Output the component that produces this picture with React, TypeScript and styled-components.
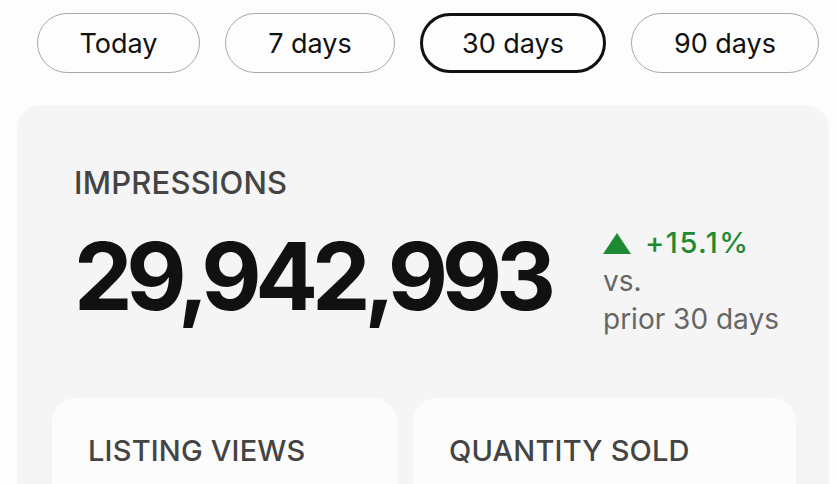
import styled, { createGlobalStyle } from "styled-components";

const GlobalStyle = createGlobalStyle`
  html, body {
    margin: 0;
    padding: 0;
    background: #fdfdfd;
    font-family: Inter, "Open Sans", sans-serif;
  }
`;

const Page = styled.div`
  width: 836px;
  height: 484px;
  overflow: hidden;
  padding: 13px 17px 0 17px;
  box-sizing: border-box;
`;

const RangeBar = styled.div`
  display: flex;
  gap: 25px;
  padding-left: 20px;
`;

const RangePill = styled.button<{ active?: boolean; w: number }>`
  width: ${({ w }) => w}px;
  height: 60px;
  box-sizing: border-box;
  border-radius: 30px;
  background: #fdfdfd;
  border: ${({ active }) => (active ? "3px solid #111" : "1.5px solid #a8a8a8")};
  font-family: Inter, sans-serif;
  font-size: 27px;
  color: #111;
  padding: 0;
`;

const Panel = styled.section`
  margin-top: 32px;
  width: 812px;
  height: 420px;
  background: #f5f5f5;
  border-radius: 24px;
  padding: 62px 32px 0 35px;
  box-sizing: border-box;
`;

const Label = styled.div<{ size: number }>`
  font-size: ${({ size }) => size}px;
  font-weight: 500;
  color: #444;
  letter-spacing: 0.2px;
`;

const HeadRow = styled.div`
  display: flex;
  align-items: flex-start;
  padding-left: 22px;
`;

const BigNumber = styled.div`
  font-size: 93px;
  font-weight: 700;
  color: #111;
  letter-spacing: -6.3px;
  line-height: 1;
  margin-top: 29px;
  width: 529px;
`;

const Change = styled.div`
  margin-top: 57px;
  display: flex;
  flex-direction: column;
  font-size: 28px;
  color: #666;
  line-height: 38px;
`;

const Delta = styled.div`
  display: flex;
  align-items: center;
  gap: 14px;
  color: #1e8a34;
  font-size: 29px;
  font-weight: 500;
  letter-spacing: 1.5px;
`;

const Cards = styled.div`
  display: grid;
  grid-template-columns: 345px 383px;
  gap: 16px;
  margin-top: 60px;
`;

const Card = styled.div`
  background: #fcfcfc;
  border-radius: 24px;
  height: 120px;
  padding: 35px 36px 0;
  box-sizing: border-box;
`;

const App = () => {
  const ranges = [
    { label: "Today", w: 163 },
    { label: "7 days", w: 170 },
    { label: "30 days", w: 186 },
    { label: "90 days", w: 188 },
  ];
  return (
    <Page>
      <GlobalStyle />
      <RangeBar>
        {ranges.map((r) => (
          <RangePill key={r.label} w={r.w} active={r.label === "30 days"}>
            {r.label}
          </RangePill>
        ))}
      </RangeBar>
      <Panel>
        <HeadRow>
          <div>
            <Label size={31} style={{ marginTop: -3 }}>IMPRESSIONS</Label>
            <BigNumber>29,942,993</BigNumber>
          </div>
          <Change>
            <Delta>
              <svg width="28" height="21" viewBox="0 0 28 21">
                <polygon points="14,0 28,21 0,21" fill="#1e8a34" />
              </svg>
              +15.1%
            </Delta>
            <span>vs.</span>
            <span>prior 30 days</span>
          </Change>
        </HeadRow>
        <Cards>
          <Card>
            <Label size={29}>LISTING VIEWS</Label>
          </Card>
          <Card>
            <Label size={29}>QUANTITY SOLD</Label>
          </Card>
        </Cards>
      </Panel>
    </Page>
  );
};

export default App;
